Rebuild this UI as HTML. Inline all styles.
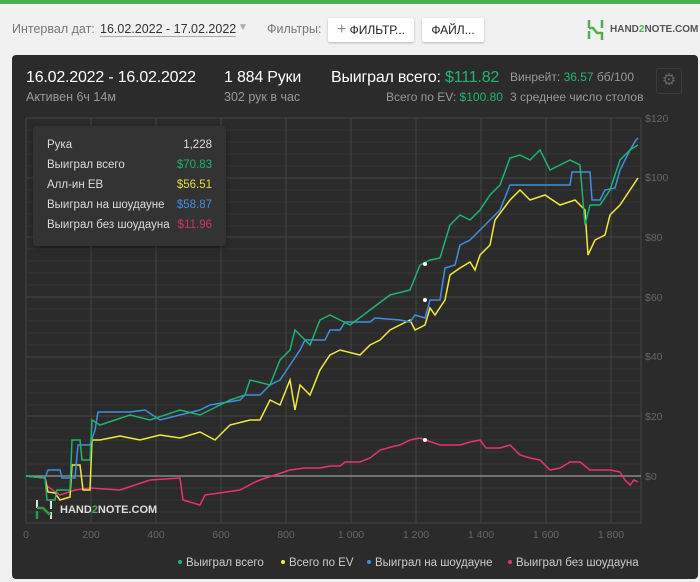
<!DOCTYPE html>
<html><head><meta charset="utf-8"><style>
body{margin:0;width:700px;height:582px;background:#f1f1f1;font-family:"Liberation Sans",sans-serif;position:relative;overflow:hidden}
.top{position:absolute;left:0;top:0;width:700px;height:4px;background:#4caf50}
.t{position:absolute;white-space:nowrap}
.btn{position:absolute;background:#fff;border-radius:2px;box-shadow:0 1px 2px rgba(0,0,0,.25);font-size:12px;color:#222;text-align:center;line-height:24px;height:24px}
.panel{position:absolute;left:12px;top:55px;width:686px;height:524px;background:#2b2b2b;border-radius:4px}
.tip{position:absolute;left:33px;top:126px;width:193px;height:120px;background:#333;border-radius:3px;box-shadow:0 2px 6px rgba(0,0,0,.4);font-size:11.5px;color:#ddd}
.tip div{position:absolute;left:14px;white-space:nowrap}
.tip span{position:absolute;right:14px;white-space:nowrap}
.h{font-size:16px;letter-spacing:-0.2px;color:#fff}
</style></head><body>
<div class="top"></div>
<div class="t" style="left:12px;top:22px;font-size:12.5px;color:#777">Интервал дат:</div>
<div class="t" style="left:100px;top:22px;font-size:12.5px;color:#333;border-bottom:1px solid #aaa">16.02.2022 - 17.02.2022</div>
<div class="t" style="left:238px;top:22px;font-size:10px;color:#aaa">▼</div>
<div class="t" style="left:267px;top:22px;font-size:12.5px;color:#777">Фильтры:</div>
<div class="btn" style="left:328px;top:18px;width:86px"><span style="color:#888;font-size:16px">+</span> ФИЛЬТР...</div>
<div class="btn" style="left:422px;top:18px;width:62px">ФАЙЛ...</div>
<svg style="position:absolute;left:586px;top:18px" width="18" height="22"><path d="M3 2v8M3 10h4l4 5h5M3 13v8M16 2v8M16 14v8" stroke="#4caf50" stroke-width="2.5" fill="none"/></svg>
<div class="t" style="left:610px;top:24px;font-size:10px;font-weight:bold;color:#555">HAND<span style="color:#4caf50">2</span>NOTE.COM</div>
<div class="panel"></div>
<div class="t h" style="left:26px;top:69px">16.02.2022 - 16.02.2022</div>
<div class="t" style="left:26px;top:90px;font-size:12.5px;color:#999">Активен 6ч 14м</div>
<div class="t h" style="left:224px;top:69px">1 884 Руки</div>
<div class="t" style="left:224px;top:90px;font-size:12.5px;color:#999">302 рук в час</div>
<div class="t h" style="left:331px;top:69px">Выиграл всего: <span style="color:#21b573">$111.82</span></div>
<div class="t" style="left:386px;top:90px;font-size:12px;color:#999">Всего по EV: <span style="color:#21b573">$100.80</span></div>
<div class="t" style="left:510px;top:70px;font-size:12px;color:#999">Винрейт: <span style="color:#21b573">36.57</span> бб/100</div>
<div class="t" style="left:510px;top:90px;font-size:12px;color:#999">3 среднее число столов</div>
<div style="position:absolute;left:656px;top:68px;width:24px;height:24px;border:1px solid #3c3c3c;border-radius:3px;color:#666;font-size:16px;text-align:center;line-height:24px">⚙</div>
<svg style="position:absolute;left:0;top:0" width="700" height="582">
<g stroke="#353535" stroke-width="1">
<path d="M26 130H641M26 142H641M26 154H641M26 166H641M26 190H641M26 202H641M26 214H641M26 226H641M26 249H641M26 261H641M26 273H641M26 285H641M26 309H641M26 321H641M26 333H641M26 345H641M26 369H641M26 381H641M26 393H641M26 405H641M26 428H641M26 440H641M26 452H641M26 464H641M26 488H641M26 500H641M26 512H641"/>
</g>
<g stroke="#444" stroke-width="1">
<path d="M26 118H641M26 178H641M26 237H641M26 297H641M26 357H641M26 416H641M26 523H641"/>
<path d="M26 118V523M91 118V523M156 118V523M221 118V523M286 118V523M351 118V523M416 118V523M481 118V523M546 118V523M611 118V523M641 118V523"/>
</g>
<path d="M26 476H641" stroke="#888" stroke-width="1.5"/>
<g fill="none" stroke-width="1.5">
<path stroke="#e8336e" d="M26 476L45 478L47 486L60 495L75 490L90 488L120 490L135 485L150 480L180 478L183 500L200 505L205 495L240 490L255 482L260 480L290 470L305 468L320 468L330 466L340 466L345 462L360 462L370 458L380 450L395 446L400 445L410 440L420 438L440 445L460 445L470 442L480 440L486 448L500 448L510 445L520 455L530 458L540 460L550 470L560 468L570 462L580 462L590 470L610 470L620 472L625 480L630 485L634 480L638 482"/>
<path stroke="#f2e93a" d="M26 476L45 478L48 492L55 493L60 500L70 497L72 465L80 465L83 490L90 490L92 440L100 440L120 436L140 440L160 435L180 438L200 432L215 440L230 425L250 420L260 420L270 400L280 405L290 380L295 410L300 385L310 395L320 370L330 355L340 350L360 355L370 345L380 340L390 330L410 320L415 330L425 325L430 308L435 315L445 300L450 275L460 268L470 262L475 270L480 255L490 245L495 220L510 200L520 190L530 200L545 195L560 205L575 200L585 210L588 255L595 240L605 235L610 215L620 205L630 190L638 178"/>
<path stroke="#3f8fe0" d="M26 476L45 478L48 470L60 470L62 478L75 478L78 445L90 445L95 430L98 412L130 412L145 410L160 420L200 410L210 405L240 400L245 395L260 395L270 385L280 380L290 365L300 350L305 340L325 340L330 330L340 330L345 322L370 322L375 318L400 320L410 322L415 315L425 318L430 300L440 300L445 268L455 265L460 245L470 240L480 230L490 220L500 210L510 185L530 185L540 185L570 185L572 172L590 172L592 200L600 200L605 190L615 188L620 170L630 150L636 140L638 138"/>
<path stroke="#1db471" d="M26 476L45 478L47 500L55 500L57 490L70 490L72 440L80 440L82 460L90 460L92 420L100 425L130 415L150 420L180 410L200 415L230 400L245 395L250 380L270 385L280 360L290 350L295 330L300 335L310 345L320 320L330 315L350 325L370 310L390 295L410 290L420 265L430 260L440 258L450 225L460 215L470 220L480 210L490 195L500 185L510 158L520 155L530 160L540 150L550 170L560 165L570 160L580 165L585 225L590 205L600 205L610 190L620 160L630 150L638 145"/>
</g>
<circle cx="425" cy="264" r="2" fill="#fff"/><circle cx="425" cy="300" r="2" fill="#fff"/><circle cx="425" cy="440" r="2" fill="#fff"/>
<g font-size="10.5" fill="#666" font-family="Liberation Sans">
<text x="645" y="122">$120</text><text x="645" y="181">$100</text><text x="645" y="241">$80</text><text x="645" y="301">$60</text><text x="645" y="360">$40</text><text x="645" y="420">$20</text><text x="645" y="480">$0</text>
<g text-anchor="middle"><text x="26" y="538">0</text><text x="91" y="538">200</text><text x="156" y="538">400</text><text x="221" y="538">600</text><text x="286" y="538">800</text><text x="351" y="538">1 000</text><text x="416" y="538">1 200</text><text x="481" y="538">1 400</text><text x="546" y="538">1 600</text><text x="611" y="538">1 800</text></g>
</g>
<path d="M37 500v8M37 508h6l6 6h2M37 511v8M51 501v8M51 512v7" stroke="#ddd" stroke-width="2" fill="none"/>
<path d="M37 508h6l6 6h2M37 511v8" stroke="#2e9a48" stroke-width="2.5" fill="none"/>
<text x="60" y="513" font-size="11" font-weight="bold" fill="#ddd" font-family="Liberation Sans">HAND<tspan fill="#4caf50">2</tspan>NOTE.COM</text>
<g font-size="11.5" fill="#ccc" font-family="Liberation Sans">
<circle cx="180" cy="562" r="2" fill="#1db471"/><text x="186" y="566">Выиграл всего</text>
<circle cx="283" cy="562" r="2" fill="#f2e93a"/><text x="289" y="566">Всего по EV</text>
<circle cx="369" cy="562" r="2" fill="#3f8fe0"/><text x="375" y="566">Выиграл на шоудауне</text>
<circle cx="510" cy="562" r="2" fill="#e8336e"/><text x="516" y="566">Выиграл без шоудауна</text>
</g>
</svg>
<div class="tip">
<div style="top:13px">Рука</div><span style="top:13px">1,228</span>
<div style="top:33px">Выиграл всего</div><span style="top:33px;color:#1db471">$70.83</span>
<div style="top:53px">Алл-ин EB</div><span style="top:53px;color:#e6dc3a">$56.51</span>
<div style="top:73px">Выиграл на шоудауне</div><span style="top:73px;color:#3f8fe0">$58.87</span>
<div style="top:93px">Выиграл без шоудауна</div><span style="top:93px;color:#d4325f">$11.96</span>
</div>
</body></html>
